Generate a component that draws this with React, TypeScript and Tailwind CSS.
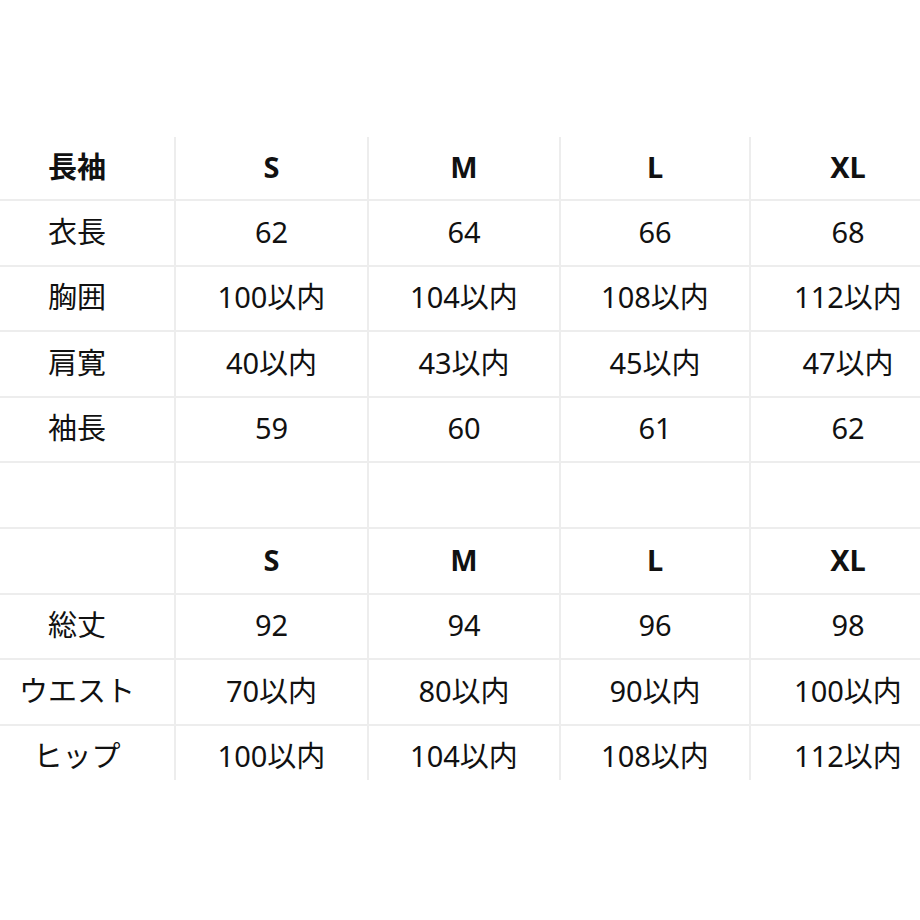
const top = [
  ["衣長", "62", "64", "66", "68"],
  ["胸囲", "100以内", "104以内", "108以内", "112以内"],
  ["肩寛", "40以内", "43以内", "45以内", "47以内"],
  ["袖長", "59", "60", "61", "62"],
];

const bottom = [
  ["総丈", "92", "94", "96", "98"],
  ["ウエスト", "70以内", "80以内", "90以内", "100以内"],
  ["ヒップ", "100以内", "104以内", "108以内", "112以内"],
];

const sizes = ["S", "M", "L", "XL"];

function Row({ cells, bold, first }: { cells: string[]; bold?: boolean; first?: boolean }) {
  return (
    <div
      className={`grid grid-cols-[194px_193px_192px_190px_196px] ${
        first ? "h-[62px]" : "h-[65.6px] border-t-2 border-[#ededed]"
      }`}
    >
      {cells.map((c, i) => (
        <div
          key={i}
          className={`flex items-center justify-center pb-[3px] ${
            i > 0 ? "border-l-2 border-[#ededed]" : ""
          } ${bold ? "font-bold" : "font-normal"}`}
        >
          {c}
        </div>
      ))}
    </div>
  );
}

export default function App() {
  return (
    <div
      className="w-[920px] h-[920px] bg-white overflow-hidden pt-[137px] text-[29px] text-[#111]"
      style={{ fontFamily: '"Noto Sans", "Noto Sans CJK JP", sans-serif' }}
    >
      <div className="h-[643px] overflow-hidden ml-[-20px] w-[965px]">
        <Row cells={["長袖", ...sizes]} bold first />
        {top.map((r) => (
          <Row key={r[0]} cells={r} />
        ))}
        <Row cells={["", "", "", "", ""]} />
        <Row cells={["", ...sizes]} bold />
        {bottom.map((r) => (
          <Row key={r[0]} cells={r} />
        ))}
      </div>
    </div>
  );
}
